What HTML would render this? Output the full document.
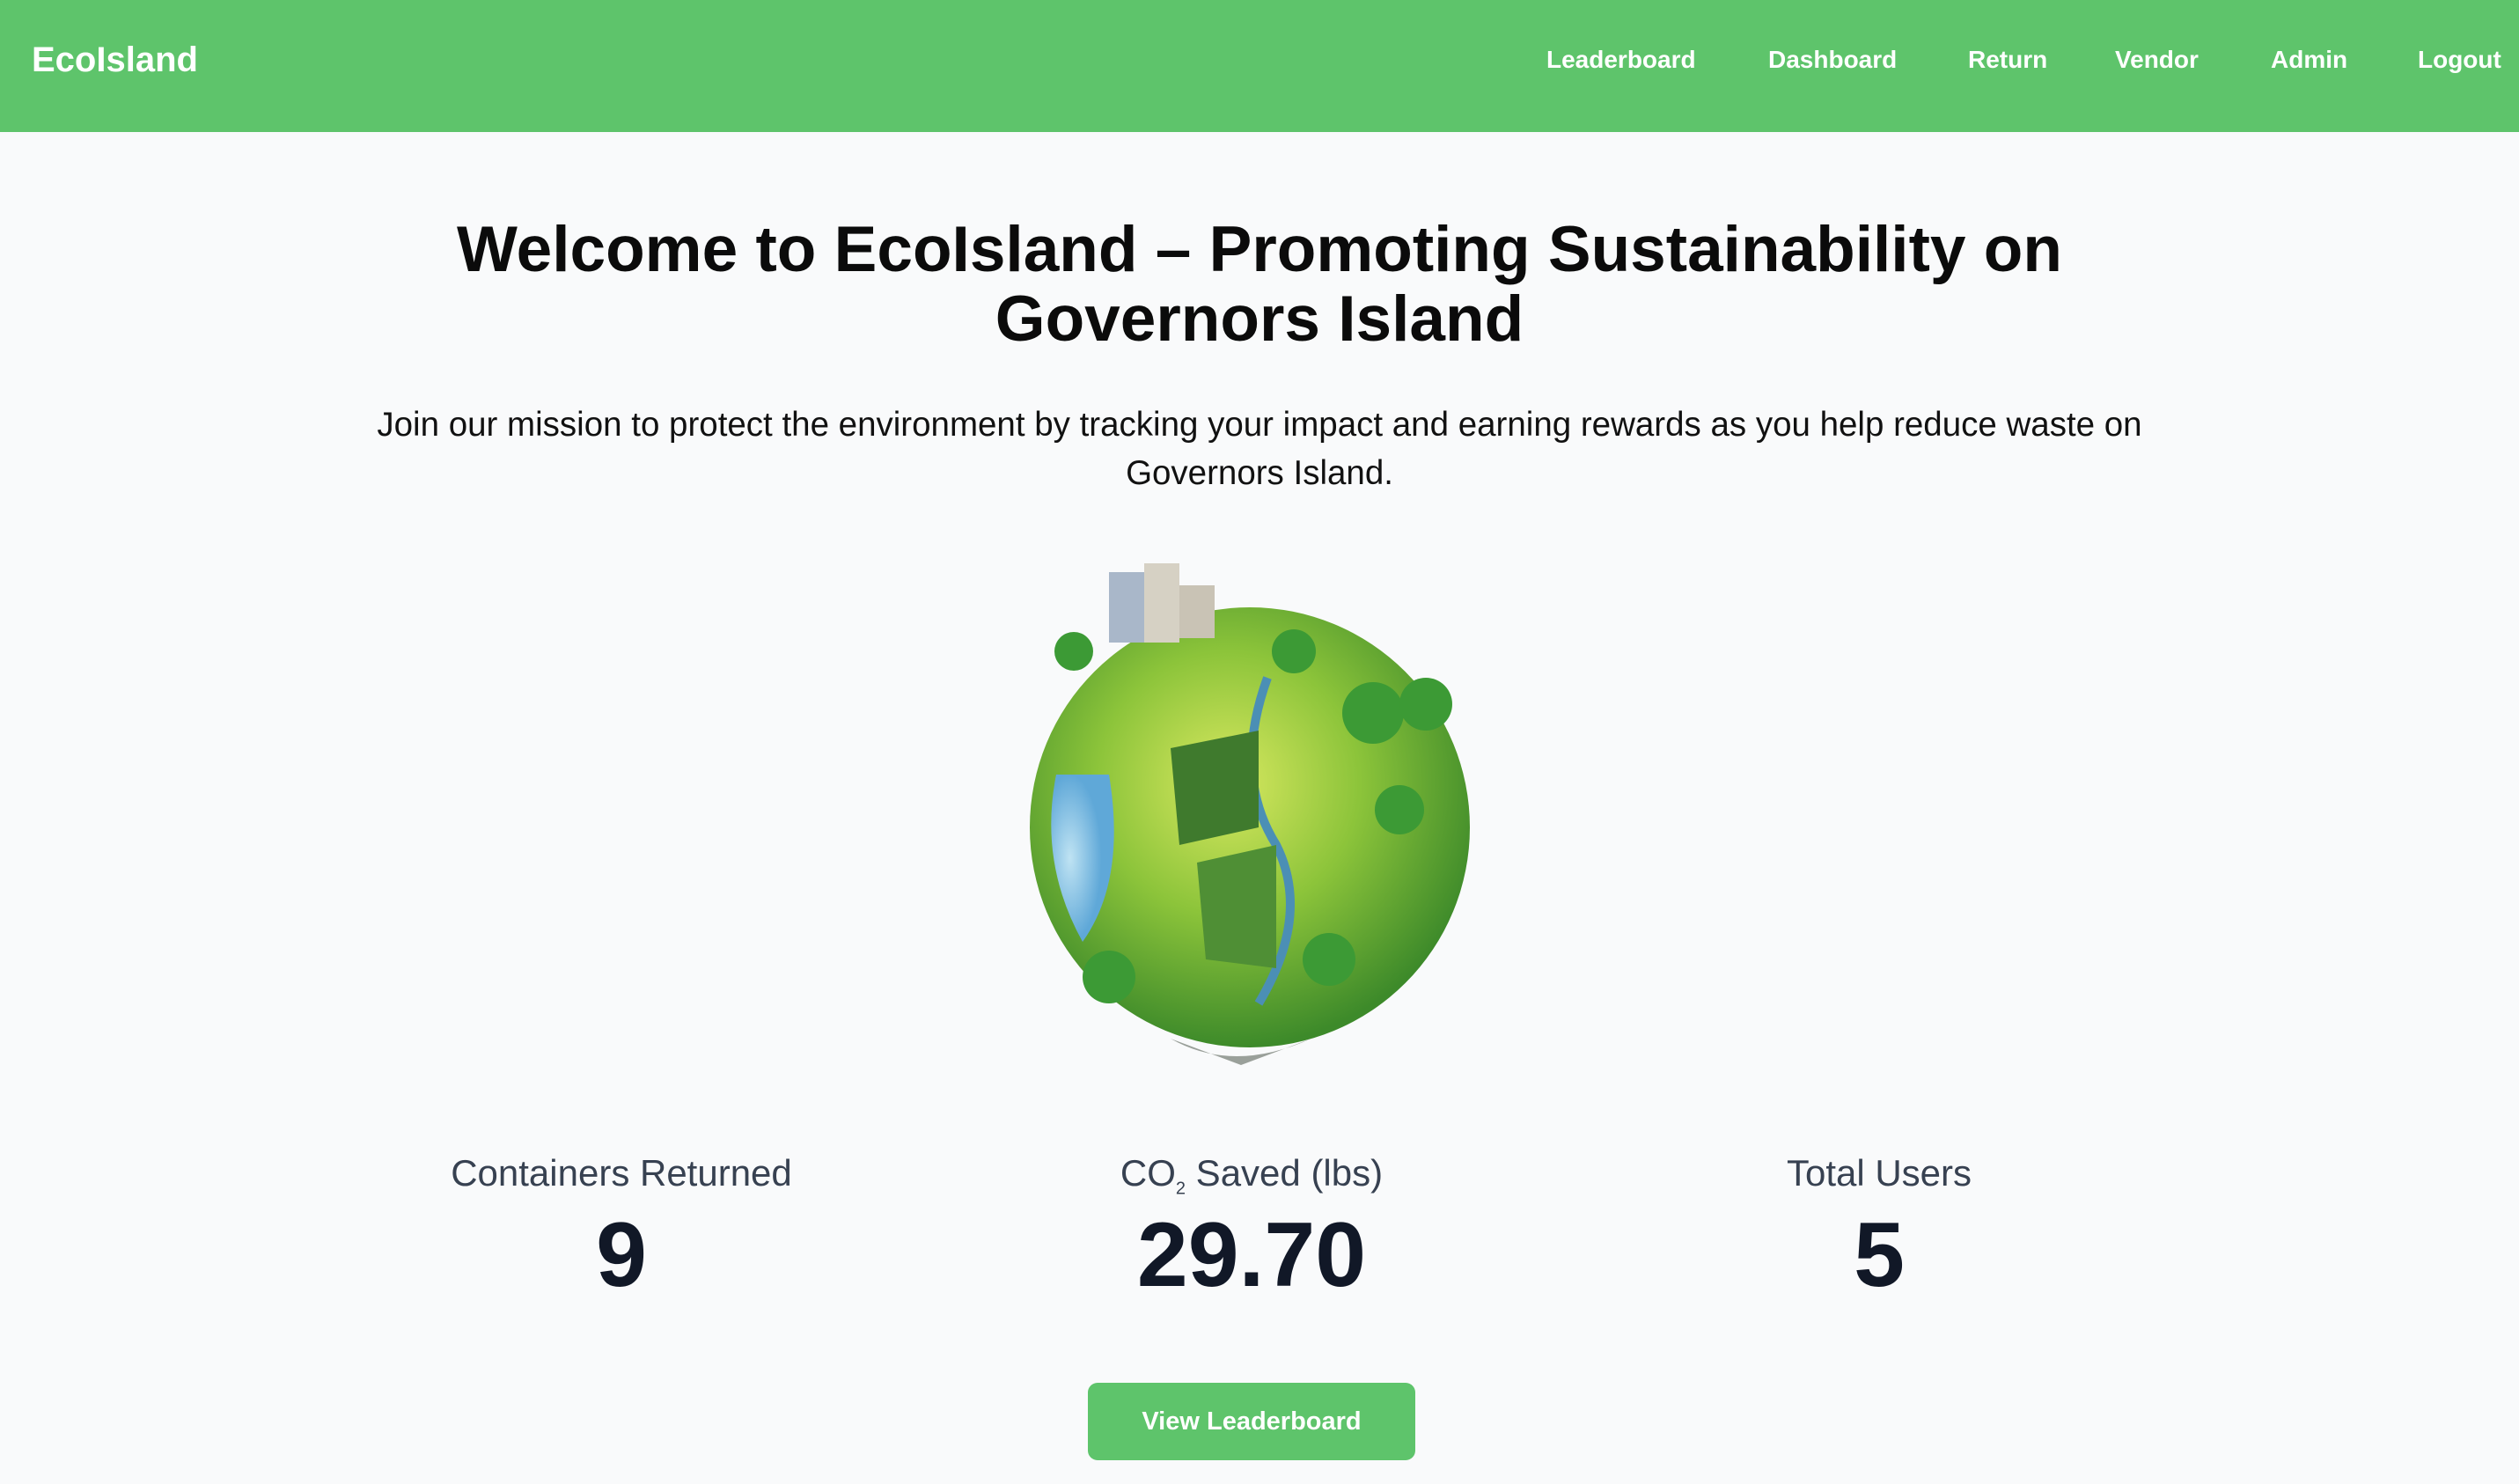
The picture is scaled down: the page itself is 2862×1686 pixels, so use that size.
<!DOCTYPE html>
<html><head><meta charset="utf-8"><style>
*{margin:0;padding:0;box-sizing:border-box}
body{width:2862px;height:1686px;background:#f9fafb;font-family:"Liberation Sans",sans-serif;overflow:hidden;position:relative}
nav{position:absolute;left:0;top:0;width:2862px;height:150px;background:#5ec46b}
.brand{position:absolute;left:36px;top:46px;font-size:40px;font-weight:bold;color:#fff}
.links a{position:absolute;top:52px;font-size:28px;font-weight:bold;color:#fff;text-decoration:none}
h1{position:absolute;left:0;width:2862px;top:244px;text-align:center;font-size:73px;line-height:79px;color:#0b0b0b;font-weight:bold}
p.lead{position:absolute;left:380px;width:2102px;top:455px;text-align:center;font-size:38.5px;line-height:55px;color:#111}
.stat{position:absolute;width:700px;text-align:center}
.lbl{font-size:42px;color:#374151;top:1309px}
.num{font-size:104px;font-weight:bold;color:#111827;top:1367px}
.btn{position:absolute;left:1236px;top:1571px;width:372px;height:88px;background:#5ec46b;border-radius:11px;color:#fff;font-size:29px;font-weight:bold;text-align:center;line-height:88px}
</style></head><body>
<nav><div class="brand">EcoIsland</div>
<div class="links">
<a style="left:1757px">Leaderboard</a><a style="left:2009px">Dashboard</a><a style="left:2236px">Return</a><a style="left:2403px">Vendor</a><a style="left:2580px">Admin</a><a style="left:2747px">Logout</a>
</div></nav>
<h1>Welcome to EcoIsland – Promoting Sustainability on<br>Governors Island</h1>
<p class="lead">Join our mission to protect the environment by tracking your impact and earning rewards as you help reduce waste on Governors Island.</p>
<svg style="position:absolute;left:1110px;top:620px" width="620" height="600" viewBox="0 0 620 600">
<defs>
<radialGradient id="g" cx="0.45" cy="0.4" r="0.6"><stop offset="0" stop-color="#d8e860"/><stop offset="0.5" stop-color="#8cc43a"/><stop offset="1" stop-color="#3d8a2a"/></radialGradient>
<radialGradient id="w" cx="0.3" cy="0.5" r="0.5"><stop offset="0" stop-color="#bfe3f3"/><stop offset="1" stop-color="#5fa8d8"/></radialGradient>
</defs>
<circle cx="310" cy="320" r="250" fill="url(#g)"/>
<path d="M90 260 Q70 360 120 450 Q170 380 150 260 Z" fill="url(#w)"/>
<path d="M330 150 Q290 260 340 340 Q380 420 320 520" stroke="#4b8fb5" stroke-width="10" fill="none"/>
<path d="M220 230 L320 210 L320 320 L230 340 Z" fill="#3f7a2d"/>
<path d="M250 360 L340 340 L340 480 L260 470 Z" fill="#4f8f35"/>
<rect x="150" y="30" width="40" height="80" fill="#a9b7c9"/><rect x="190" y="20" width="40" height="90" fill="#d6d1c4"/><rect x="230" y="45" width="40" height="60" fill="#c9c3b5"/>
<g fill="#3c9a35"><circle cx="450" cy="190" r="35"/><circle cx="510" cy="180" r="30"/><circle cx="150" cy="490" r="30"/><circle cx="400" cy="470" r="30"/><circle cx="480" cy="300" r="28"/><circle cx="110" cy="120" r="22"/><circle cx="360" cy="120" r="25"/></g>
<path d="M220 560 Q290 600 380 560 L300 590 Z" fill="#9aa09a"/>
</svg>
<div class="stat lbl" style="left:356px">Containers Returned</div>
<div class="stat lbl" style="left:1072px">CO<sub style="font-size:20px">2</sub> Saved (lbs)</div>
<div class="stat lbl" style="left:1785px">Total Users</div>
<div class="stat num" style="left:356px">9</div>
<div class="stat num" style="left:1072px">29.70</div>
<div class="stat num" style="left:1785px">5</div>
<div class="btn">View Leaderboard</div>
</body></html>
